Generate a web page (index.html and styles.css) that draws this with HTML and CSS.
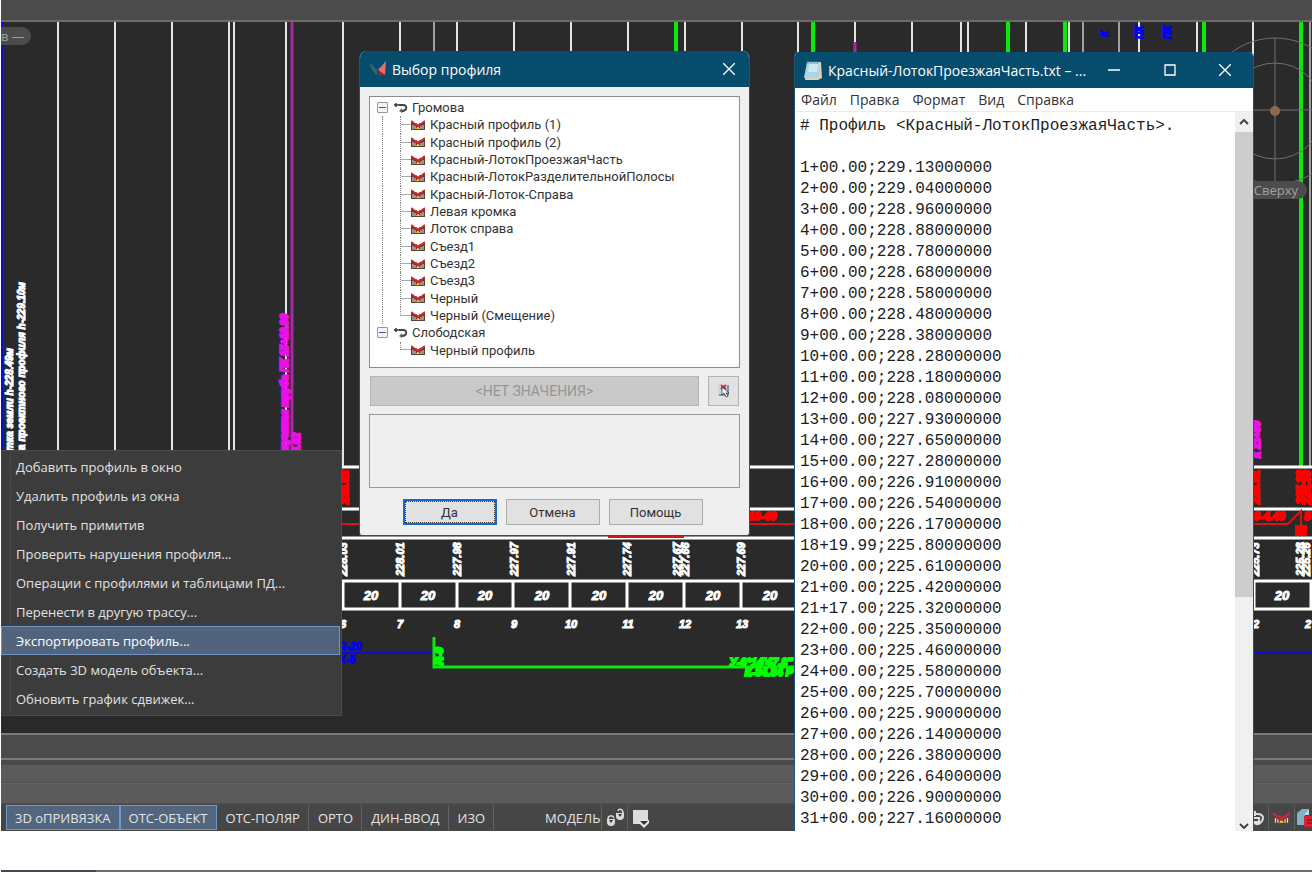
FILE: index.html
```html
<!DOCTYPE html>
<html lang="ru">
<head>
    <meta charset="UTF-8">
    <meta name="viewport" content="width=device-width, initial-scale=1.0">
    <title>Выбор профиля</title>
    <link rel="stylesheet" href="styles.css">
</head>
<body>
    <svg class="symbols" width="0" height="0">
        <symbol id="road" viewBox="0 0 14 12">
            <path d="M0 3h5M2 1v4" stroke="#333" stroke-width="1.4" fill="none"/>
            <path d="M5 3h4c2 0 4 1 3 4-1 2-3 2-5 2" stroke="#444" stroke-width="2" fill="none"/>
            <path d="M8 6l-3 3 3 2z" fill="#666"/>
        </symbol>
        <symbol id="profile" viewBox="0 0 14 10">
            <path d="M0 1l5 4h4l5-4v9H0z" fill="#5b4238"/>
            <path d="M2 5v4M4 6v3M10 6v3M12 5v4" stroke="#f2d9cc" stroke-width="1"/>
            <path d="M5 9l2-3 2 3z" fill="#f2cf22"/>
            <path d="M0 1l4 3h1l2 2 2-2h1l4-3" stroke="#d42431" stroke-width="2" fill="none"/>
        </symbol>
    </svg>

    <main class="app">
        <div class="topBar"></div>
        <div class="canvas">
            <svg class="drawing" width="100%" height="100%">
                <g class="grid">
                    <path d="M57 0v445M114 0v445M171 0v445M228 0v445M233 0v445M285 0v445M342 0v445M399 0v60M456 0v60M513 0v60M570 0v60M627 0v60M684 0v60M741 0v445M797 0v60M854 0v20M911 0v60M960 0v60M967 0v60M1025 0v60M1068 0v60M1138 0v60M1196 0v60M1252 0v445"/>
                    <path class="dim" d="M433 0v60M1082 0v60M1118 0v60M1309 0v445"/>
                </g>
                <path class="line blue" d="M1 0v445"/>
                <path class="line violet" d="M291 0v445M854 20v40"/>
                <path class="line green" d="M675 0v60M812 0v60M1007 0v60M1064 0v60M1203 0v60M1300 0v446"/>

                <!-- heights along the section -->
                <g class="vert long">
                    <text transform="translate(12 326) rotate(-90)" text-anchor="end">Отметка земли h-228.49м</text>
                    <text transform="translate(24 260) rotate(-90)" text-anchor="end">Отметка проектного профиля h-229.10м</text>
                </g>
                <g class="vert long magenta">
                    <text transform="translate(287 292) rotate(-90)" text-anchor="end">Водопропускная труба ПК 15+10.00</text>
                    <text transform="translate(299 411) rotate(-90)" text-anchor="end">h=5.02</text>
                    <text transform="translate(1259 399) rotate(-90)" text-anchor="end">К 21+80</text>
                </g>
                <g class="vert long blueText">
                    <text transform="translate(1107 15) rotate(-90)">К</text>
                    <text transform="translate(1142 17) rotate(-90)">ПК</text>
                    <text transform="translate(1170 17) rotate(-90)">ПК</text>
                </g>

                <g class="table">
                    <path d="M341 445h971M341 487h971M341 516h971M341 559h971M341 587h971"/>
                    <path d="M342 559v28M399 559v28M456 559v28M512 559v28M569 559v28M626 559v28M683 559v28M740 559v28M1253 559v28M1310 559v28"/>
                </g>
                <path class="line red" d="M341 502h946l13-13v14M607 515h76"/>
                <path class="redFill" d="M1294 503h12v11h-12z"/>
                <g class="vert redText">
                    <text transform="translate(347 482) rotate(-90)">228.62</text>
                    <text transform="translate(1258 482) rotate(-90)">225.91</text>
                    <text transform="translate(1303 482) rotate(-90)">225.28</text>
                    <text transform="translate(1309 482) rotate(-90)">225.30</text>
                </g>
                <g class="num small redText">
                    <text x="761" y="498">10-49</text>
                    <text x="1265" y="498">10-4.40</text>
                    <text x="1306" y="498">8</text>
                </g>
                <g class="vert">
                    <text transform="translate(346 554) rotate(-90)">228.03</text>
                    <text transform="translate(403 554) rotate(-90)">228.01</text>
                    <text transform="translate(460 554) rotate(-90)">227.98</text>
                    <text transform="translate(517 554) rotate(-90)">227.97</text>
                    <text transform="translate(574 554) rotate(-90)">227.91</text>
                    <text transform="translate(630 554) rotate(-90)">227.74</text>
                    <text transform="translate(680 554) rotate(-90)">227.67</text>
                    <text transform="translate(688 554) rotate(-90)">227.66</text>
                    <text transform="translate(744 554) rotate(-90)">227.69</text>
                    <text transform="translate(1258 554) rotate(-90)">225.73</text>
                    <text transform="translate(1303 554) rotate(-90)">225.28</text>
                    <text transform="translate(1309 554) rotate(-90)">225.26</text>
                </g>
                <g class="num">
                    <text x="370" y="578">20</text>
                    <text x="427" y="578">20</text>
                    <text x="484" y="578">20</text>
                    <text x="541" y="578">20</text>
                    <text x="598" y="578">20</text>
                    <text x="655" y="578">20</text>
                    <text x="712" y="578">20</text>
                    <text x="769" y="578">20</text>
                    <text x="1281" y="578">20</text>
                </g>
                <g class="num small">
                    <text x="342" y="606">6</text>
                    <text x="399" y="606">7</text>
                    <text x="456" y="606">8</text>
                    <text x="513" y="606">9</text>
                    <text x="570" y="606">10</text>
                    <text x="627" y="606">11</text>
                    <text x="684" y="606">12</text>
                    <text x="741" y="606">13</text>
                    <text x="1255" y="606">2</text>
                    <text x="1307" y="606">2</text>
                </g>

                <path class="line blue" d="M341 631h91M1252 631h60"/>
                <g class="num small blueText">
                    <text x="349" y="628">R-20</text>
                    <text x="346" y="641">К-5</text>
                </g>
                <path class="line greenThin" d="M433 615v30h362"/>
                <g class="vert greenText">
                    <text transform="translate(442 643) rotate(-90)">R-0</text>
                </g>
                <g class="num small greenText">
                    <text x="760" y="644">У-0°14'47.8''</text>
                    <text x="768" y="654">К-84.84 Р</text>
                </g>

                <g class="compass">
                    <circle cx="1274" cy="89" r="73"/>
                    <circle cx="1274" cy="89" r="48"/>
                    <path d="M1274 16v143M1252 88h60"/>
                    <circle class="hub" cx="1274" cy="89" r="5"/>
                </g>
            </svg>
            <span class="pill viewName">в —</span>
            <span class="pill viewSide">Сверху</span>
        </div>
        <div class="scrollStrip"></div>
        <div class="commandLine"></div>
        <div class="commandLine second"></div>

        <div class="statusBar">
            <button class="mode on">3D оПРИВЯЗКА</button>
            <button class="mode on">ОТС-ОБЪЕКТ</button>
            <button class="mode">ОТС-ПОЛЯР</button>
            <button class="mode">ОРТО</button>
            <button class="mode">ДИН-ВВОД</button>
            <button class="mode">ИЗО</button>
            <button class="mode model">МОДЕЛЬ</button>
            <button class="iconBtn" aria-label="Блокировка">
                <svg width="20" height="20" viewBox="0 0 20 20" fill="none">
                    <path d="M2 11h8v3a4 4 0 0 1-8 0zM11 5h8v3a4 4 0 0 1-8 0z" fill="#ddd"/>
                    <path d="M3 11c0-4 5-4 6-1M13 3c1-3 5-2 5 2" stroke="#ddd" stroke-width="1.5"/>
                    <path d="M4 12h4l-2 3zM13 6h4l-2 3z" fill="#333"/>
                </svg>
            </button>
            <button class="iconBtn" aria-label="Настройка">
                <svg width="20" height="20" viewBox="0 0 20 20">
                    <path d="M2 2h15v14H2z" fill="#dcdcdc"/>
                    <path d="M8 12h10v3l-5 5-5-5z" fill="#e8e8e8"/>
                    <path d="M9 13h8l-4 4z" fill="#333"/>
                </svg>
            </button>
            <div class="tray">
                <button class="iconBtn first" aria-label="Трасса">
                    <svg width="14" height="18" viewBox="0 0 14 18" fill="none">
                        <path d="M1 5h5c5 0 6 4 4 7s-5 4-8 2" stroke="#ddd" stroke-width="2"/>
                        <path d="M1 9h6v4H2M3 2v5" stroke="#ddd" stroke-width="2"/>
                    </svg>
                </button>
                <button class="iconBtn" aria-label="Профиль">
                    <svg width="17" height="12"><use href="#profile"/></svg>
                </button>
                <button class="iconBtn" aria-label="Сечение">
                    <svg width="16" height="20" viewBox="0 0 16 20">
                        <path d="M1 5l5-4h7l-4 4v12H1z" fill="#7fb4c6"/>
                        <path d="M9 5l4-4v6H9z" fill="#b7dde8"/>
                        <path d="M8 8h8v11H8z" fill="#d5232f"/>
                        <path d="M11 12h5M11 15h5" stroke="#7b0c14" stroke-width="1"/>
                    </svg>
                </button>
            </div>
        </div>

        <menu class="contextMenu">
            <li><button>Добавить профиль в окно</button></li>
            <li><button>Удалить профиль из окна</button></li>
            <li><button>Получить примитив</button></li>
            <li><button>Проверить нарушения профиля...</button></li>
            <li><button>Операции с профилями и таблицами ПД...</button></li>
            <li><button>Перенести в другую трассу...</button></li>
            <li><button class="active">Экспортировать профиль...</button></li>
            <li><button>Создать 3D модель объекта...</button></li>
            <li><button>Обновить график сдвижек...</button></li>
        </menu>

        <section class="window dialog">
            <header class="titleBar">
                <svg width="17" height="16" viewBox="0 0 17 16">
                    <path d="M0 1l8 8v6L3 9z" fill="#2b6a70"/>
                    <path d="M17 0l-1 14-7-5z" fill="#ee6a62"/>
                    <path d="M9 9l7 5-6 1z" fill="#8c3035"/>
                </svg>
                <h1>Выбор профиля</h1>
                <button class="winBtn" aria-label="Закрыть">
                    <svg width="12" height="12"><path d="M0 0l12 12M12 0L0 12"/></svg>
                </button>
            </header>
            <div class="dialogBody">
                <ul class="tree">
                    <li class="group first"><i class="toggle"></i><svg width="14" height="12"><use href="#road"/></svg>Громова</li>
                    <li class="item"><svg width="14" height="10"><use href="#profile"/></svg>Красный профиль (1)</li>
                    <li class="item"><svg width="14" height="10"><use href="#profile"/></svg>Красный профиль (2)</li>
                    <li class="item"><svg width="14" height="10"><use href="#profile"/></svg>Красный-ЛотокПроезжаяЧасть</li>
                    <li class="item"><svg width="14" height="10"><use href="#profile"/></svg>Красный-ЛотокРазделительнойПолосы</li>
                    <li class="item"><svg width="14" height="10"><use href="#profile"/></svg>Красный-Лоток-Справа</li>
                    <li class="item"><svg width="14" height="10"><use href="#profile"/></svg>Левая кромка</li>
                    <li class="item"><svg width="14" height="10"><use href="#profile"/></svg>Лоток справа</li>
                    <li class="item"><svg width="14" height="10"><use href="#profile"/></svg>Съезд1</li>
                    <li class="item"><svg width="14" height="10"><use href="#profile"/></svg>Съезд2</li>
                    <li class="item"><svg width="14" height="10"><use href="#profile"/></svg>Съезд3</li>
                    <li class="item"><svg width="14" height="10"><use href="#profile"/></svg>Черный</li>
                    <li class="item end"><svg width="14" height="10"><use href="#profile"/></svg>Черный (Смещение)</li>
                    <li class="group"><i class="toggle"></i><svg width="14" height="12"><use href="#road"/></svg>Слободская</li>
                    <li class="item end last"><svg width="14" height="10"><use href="#profile"/></svg>Черный профиль</li>
                </ul>
                <div class="valueRow">
                    <button class="noValue" disabled>&lt;НЕТ ЗНАЧЕНИЯ&gt;</button>
                    <button class="pick" aria-label="Указать">
                        <svg width="12" height="14" viewBox="0 0 12 14">
                            <path d="M0 1h11v10H0z" fill="#c9d8e0"/>
                            <path d="M3 1l5 4M8 1L3 5" stroke="#cc2b37" stroke-width="2"/>
                            <path d="M10 1v10H1" stroke="#4d86ab" stroke-width="1.5" fill="none"/>
                            <path d="M4 3v8l2-2 2 4 2-1-2-3h3z" fill="#fff" stroke="#222" stroke-width=".7"/>
                        </svg>
                    </button>
                </div>
                <div class="preview"></div>
                <div class="actions">
                    <button class="default">Да</button>
                    <button>Отмена</button>
                    <button>Помощь</button>
                </div>
            </div>
        </section>

        <section class="window notepad">
            <header class="titleBar">
                <svg width="18" height="20" viewBox="0 0 18 20">
                    <path d="M4 2h13l1 16-4 2H1z" fill="#d9d2bd"/>
                    <path d="M3 2h13l-2 16H0z" fill="#a9d6e4"/>
                    <path d="M5 4h9l-1 8H4z" fill="#cdeaf2"/>
                    <path d="M4 1v3M7 1v3M10 1v3M13 1v3" stroke="#6f8f9a" stroke-width="1"/>
                </svg>
                <h2>Красный-ЛотокПроезжаяЧасть.txt – ...</h2>
                <button class="winBtn" aria-label="Свернуть">
                    <svg width="12" height="12"><path d="M0 6h12"/></svg>
                </button>
                <button class="winBtn" aria-label="Развернуть">
                    <svg width="12" height="12"><path d="M1 1h10v10H1z"/></svg>
                </button>
                <button class="winBtn" aria-label="Закрыть">
                    <svg width="12" height="12"><path d="M0 0l12 12M12 0L0 12"/></svg>
                </button>
            </header>
            <nav class="menuBar">
                <button>Файл</button>
                <button>Правка</button>
                <button>Формат</button>
                <button>Вид</button>
                <button>Справка</button>
            </nav>
            <div class="editor">
                <textarea aria-label="Текст" spellcheck="false"># Профиль &lt;Красный-ЛотокПроезжаяЧасть&gt;.

1+00.00;229.13000000
2+00.00;229.04000000
3+00.00;228.96000000
4+00.00;228.88000000
5+00.00;228.78000000
6+00.00;228.68000000
7+00.00;228.58000000
8+00.00;228.48000000
9+00.00;228.38000000
10+00.00;228.28000000
11+00.00;228.18000000
12+00.00;228.08000000
13+00.00;227.93000000
14+00.00;227.65000000
15+00.00;227.28000000
16+00.00;226.91000000
17+00.00;226.54000000
18+00.00;226.17000000
18+19.99;225.80000000
20+00.00;225.61000000
21+00.00;225.42000000
21+17.00;225.32000000
22+00.00;225.35000000
23+00.00;225.46000000
24+00.00;225.58000000
25+00.00;225.70000000
26+00.00;225.90000000
27+00.00;226.14000000
28+00.00;226.38000000
29+00.00;226.64000000
30+00.00;226.90000000
31+00.00;227.16000000</textarea>
                <div class="scrollBar">
                    <svg width="10" height="6"><path d="M1 5l4-4 4 4"/></svg>
                    <div class="track"><div class="thumb"></div></div>
                    <svg width="10" height="6"><path d="M1 1l4 4 4-4"/></svg>
                </div>
            </div>
        </section>
    </main>
    <footer class="bottomEdge"><span></span></footer>
</body>
</html>
```

FILE: styles.css
```css
* {
    box-sizing: border-box;
}
body {
    margin: 0;
    min-height: 100vh;
    display: flex;
    flex-direction: column;
    background: #fff;
    font-family: "Open Sans", "Noto Sans", sans-serif;
    font-size: 13px;
    overflow: hidden;
}
button {
    font: inherit;
    color: inherit;
    background: none;
    border: 0;
    padding: 0;
    margin: 0;
}
svg {
    flex: none;
}
.symbols {
    position: absolute;
}

/* main window */
.app {
    position: relative;
    flex: 1;
    display: flex;
    flex-direction: column;
    margin-left: 1px;
    overflow: hidden;
    background: #464646;
}
.topBar {
    height: 22px;
    background: #4b4b4b;
    border-bottom: 2px solid #6b6b6b;
}
.canvas {
    position: relative;
    flex: 1;
    background: #2a2a2a;
    overflow: hidden;
}
.drawing {
    position: absolute;
    inset: 0;
}
.scrollStrip {
    height: 27px;
    background: #4b4b4b;
    border-top: 2px solid #7b7b7b;
    border-bottom: 2px solid #7b7b7b;
}
.commandLine {
    height: 23px;
    background: #5b5b5b;
    border-top: 5px solid #4a4a4a;
    border-bottom: 1px solid #505050;
}
.commandLine.second {
    height: 21px;
    border-top: 1px solid #666;
}
.bottomEdge {
    height: 41px;
    padding-top: 39px;
    margin-left: 1px;
}
.bottomEdge span {
    display: block;
    height: 2px;
    background: #6e6e70;
    border-left: 95px solid #48484c;
}

/* drawing */
.grid path {
    stroke: #e4e4e4;
    stroke-width: 2;
}
.grid .dim {
    stroke: #a0a0a0;
}
.table path {
    stroke: #fff;
    stroke-width: 3;
}
.line {
    fill: none;
    stroke-width: 2;
}
.blue {
    stroke: #0c0cd8;
}
.violet {
    stroke: #a42aa6;
    stroke-width: 3;
}
.green {
    stroke: #0be80b;
    stroke-width: 4;
}
.greenThin {
    stroke: #0be80b;
    stroke-width: 3;
}
.red {
    stroke: #d81414;
}
.redFill {
    fill: #f00;
}
.vert,
.num {
    font: italic bold 11px "Liberation Sans Narrow", "Liberation Sans", sans-serif;
    fill: #fff;
    stroke: #fff;
    stroke-width: 1px;
}
.vert.long {
    font-size: 10px;
}
.num {
    font-size: 13px;
    text-anchor: middle;
}
.num.small {
    font-size: 11px;
}
.vert.magenta {
    fill: #e812e8;
    stroke: #e812e8;
    stroke-width: 2px;
}
.redText {
    fill: #f00;
    stroke: #f00;
    stroke-width: 2px;
}
.blueText {
    fill: #00f;
    stroke: #00f;
}
.greenText {
    fill: #0f0;
    stroke: #0f0;
    stroke-width: 2px;
}
.compass {
    fill: none;
    stroke: #707070;
    stroke-width: 1;
}
.compass .hub {
    fill: #8c6b4c;
    stroke: none;
}
.pill {
    position: absolute;
    height: 18px;
    line-height: 18px;
    background: #4c4c4c;
    color: #a0a0a0;
}
.viewName {
    left: 0;
    top: 5px;
    width: 30px;
    border-radius: 0 9px 9px 0;
}
.viewSide {
    right: 5px;
    top: 159px;
    padding: 0 9px;
    border-radius: 9px;
}

/* status bar */
.statusBar {
    display: flex;
    height: 27px;
    padding: 1px 0 1px 5px;
    color: #e4e4e4;
    background: #464646;
}
.mode {
    padding: 0 8px 0 9px;
    border-right: 1px solid #626262;
    white-space: nowrap;
}
.mode.on {
    padding: 0 8px;
    background: #52667f;
    border: 1px solid #7097cd;
}
.mode.model {
    margin-left: 42px;
    padding-right: 1px;
}
.iconBtn {
    display: flex;
    align-items: center;
    justify-content: center;
    width: 26px;
    border-right: 1px solid #5e5e5e;
}
.iconBtn + .iconBtn {
    border-right: 0;
}
.tray {
    display: flex;
    margin-left: auto;
}
.tray .iconBtn + .iconBtn {
    border-left: 1px solid #5e5e5e;
}
.tray .first {
    width: 18px;
    border-right: 0;
}
.tray .iconBtn:last-child {
    width: 18px;
    overflow: hidden;
}

/* context menu */
.contextMenu {
    position: absolute;
    left: 0;
    top: 450px;
    width: 341px;
    margin: 0;
    padding: 1px 1px 2px 0;
    list-style: none;
    color: #e2e2e2;
    background: linear-gradient(90deg, #3c3c3c 9px, #484848 9px, #484848 10px, #3c3c3c 10px);
    border: 1px solid #4c4c4c;
    border-left: 0;
}
.contextMenu button {
    display: block;
    width: 100%;
    height: 29px;
    padding-left: 15px;
    text-align: left;
    white-space: nowrap;
}
.contextMenu .active {
    background: #52647c;
    outline: 1px solid #6f94c6;
    outline-offset: -1px;
    color: #fff;
}

/* windows */
.window {
    position: absolute;
    display: flex;
    flex-direction: column;
    border: 1px solid #1a5876;
    border-top: 0;
    background: #efefef;
    overflow: hidden;
}
.titleBar {
    display: flex;
    align-items: center;
    height: 36px;
    padding-left: 9px;
    background: #064c6c;
    color: #fff;
}
.titleBar h1,
.titleBar h2 {
    flex: 1;
    margin: 0 0 0 6px;
    font-size: 14px;
    font-weight: normal;
    white-space: nowrap;
}
.winBtn {
    display: flex;
    justify-content: center;
    width: 40px;
}
.winBtn path {
    stroke: #fff;
    stroke-width: 1.3;
    fill: none;
}

/* profile dialog */
.dialog {
    left: 358px;
    top: 51px;
    width: 391px;
    border-radius: 7px 7px 3px 3px;
    font-family: Roboto, "Liberation Sans", sans-serif;
    color: #333;
}
.dialog h1 {
    font-family: "Open Sans", "Noto Sans", sans-serif;
}
.dialogBody {
    display: flex;
    flex-direction: column;
    gap: 8px;
    padding: 9px 9px 10px;
}
.tree {
    display: grid;
    grid-auto-rows: 1fr;
    height: 272px;
    margin: 0;
    padding: 2px 0 8px;
    list-style: none;
    background: #fff;
    border: 1px solid #8c8c8c;
}
.tree li {
    position: relative;
    display: flex;
    align-items: center;
    white-space: nowrap;
}
.group {
    gap: 4px;
    padding-left: 7px;
}
.group svg {
    margin-left: 2px;
}
.item {
    gap: 5px;
    padding-left: 41px;
}
.item::before {
    content: "";
    position: absolute;
    left: 30px;
    top: 0;
    bottom: 0;
    width: 10px;
    border-left: 1px dotted #888;
    background: linear-gradient(90deg, #aaa, #aaa) 0 50% / 100% 1px no-repeat;
}
.item.end::before {
    bottom: 50%;
    background-position: 0 100%;
}
.item::after {
    content: "";
    position: absolute;
    left: 12px;
    top: 0;
    bottom: 0;
    border-left: 1px dotted #888;
}
.item.last::after {
    display: none;
}
.toggle {
    width: 11px;
    height: 11px;
    border: 1px solid #999;
    border-radius: 1px;
    background: linear-gradient(#44558f, #44558f) 50% 50% / 7px 1px no-repeat #f4f4f4;
}
.valueRow {
    display: flex;
    gap: 9px;
    padding: 0 1px;
}
.valueRow button {
    height: 30px;
    border: 1px solid #b4b4b4;
}
.noValue {
    flex: 1;
    background: #c9c9c9;
    color: #959595;
    font-size: 14px;
}
.pick {
    display: flex;
    align-items: center;
    justify-content: center;
    width: 31px;
    background: #e1e1e1;
}
.preview {
    height: 74px;
    border: 1px solid #999;
}
.actions {
    display: flex;
    justify-content: center;
    gap: 9px;
    padding: 3px 4px 0 0;
}
.actions button {
    width: 94px;
    height: 26px;
    border: 1px solid #adadad;
    background: #e1e1e1;
}
.actions .default {
    border: 2px solid #1668c4;
    outline: 1px dotted #333;
    outline-offset: -3px;
}

/* notepad */
.notepad {
    left: 793px;
    top: 52px;
    bottom: 0;
    width: 460px;
    border-bottom: 0;
    border-radius: 5px 5px 0 0;
    background: #fff;
}
.notepad .winBtn {
    width: 56px;
}
.menuBar {
    display: flex;
    gap: 13px;
    height: 24px;
    padding: 0 6px;
    border-bottom: 1px solid #ececec;
    color: #333;
    font-size: 14px;
}
.editor {
    flex: 1;
    display: flex;
    min-height: 0;
}
.editor textarea {
    flex: 1;
    min-width: 0;
    margin: 0;
    padding: 4px 0 0 5px;
    border: 0;
    outline: 0;
    resize: none;
    overflow: hidden;
    white-space: pre;
    background: #fff;
    color: #1c1c1c;
    font: 16px/21px "Liberation Mono", monospace;
}
.scrollBar {
    display: flex;
    flex-direction: column;
    align-items: center;
    width: 18px;
    padding: 7px 0 2px;
    gap: 7px;
    background: #f0f0f0;
}
.scrollBar path {
    fill: none;
    stroke: #444;
    stroke-width: 2;
}
.track {
    flex: 1;
    width: 100%;
}
.thumb {
    height: 68%;
    background: #cdcdcd;
}
```
